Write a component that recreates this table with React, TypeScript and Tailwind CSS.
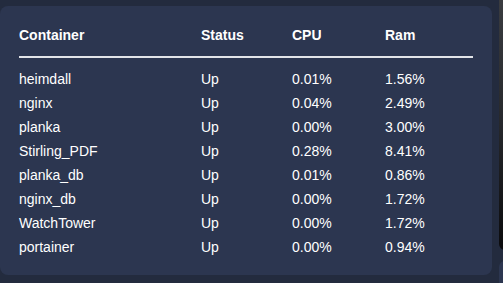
import React from "react";

const rows = [
  ["heimdall", "Up", "0.01%", "1.56%"],
  ["nginx", "Up", "0.04%", "2.49%"],
  ["planka", "Up", "0.00%", "3.00%"],
  ["Stirling_PDF", "Up", "0.28%", "8.41%"],
  ["planka_db", "Up", "0.01%", "0.86%"],
  ["nginx_db", "Up", "0.00%", "1.72%"],
  ["WatchTower", "Up", "0.00%", "1.72%"],
  ["portainer", "Up", "0.00%", "0.94%"],
];

const cols = "grid grid-cols-[182px_91px_93px_88px]";

export default function App() {
  return (
    <div
      className="w-[503px] h-[283px] bg-[#232b3e] overflow-hidden flex text-white"
      style={{ fontFamily: '"Liberation Sans", Arial, sans-serif' }}
    >
      <div className="mt-[6px] w-[492px] h-[269px] shrink-0 bg-[#2c3650] rounded-[8px] px-[19px] pt-[17px]">
        <div className={`${cols} h-[24px] items-center text-[14px] font-bold`}>
          <div>Container</div>
          <div>Status</div>
          <div>CPU</div>
          <div>Ram</div>
        </div>
        <div className="mt-[9px] h-[2px] bg-[#e2e4e8]" />
        <div className="mt-[9px]">
          {rows.map((r) => (
            <div key={r[0]} className={`${cols} h-[24px] items-center text-[14px]`}>
              {r.map((c, i) => (
                <div key={i}>{c}</div>
              ))}
            </div>
          ))}
        </div>
      </div>
      <div className="ml-[7px] flex flex-col shrink-0 w-[10px]">
        <div className="h-[250px] rounded-bl-[6px] bg-gradient-to-b from-[#3a3c40] via-[#26282c] to-[#0b0b0d]" />
        <div className="mt-[11px] flex-1 rounded-tl-[6px] bg-[#2c3650]" />
      </div>
    </div>
  );
}
